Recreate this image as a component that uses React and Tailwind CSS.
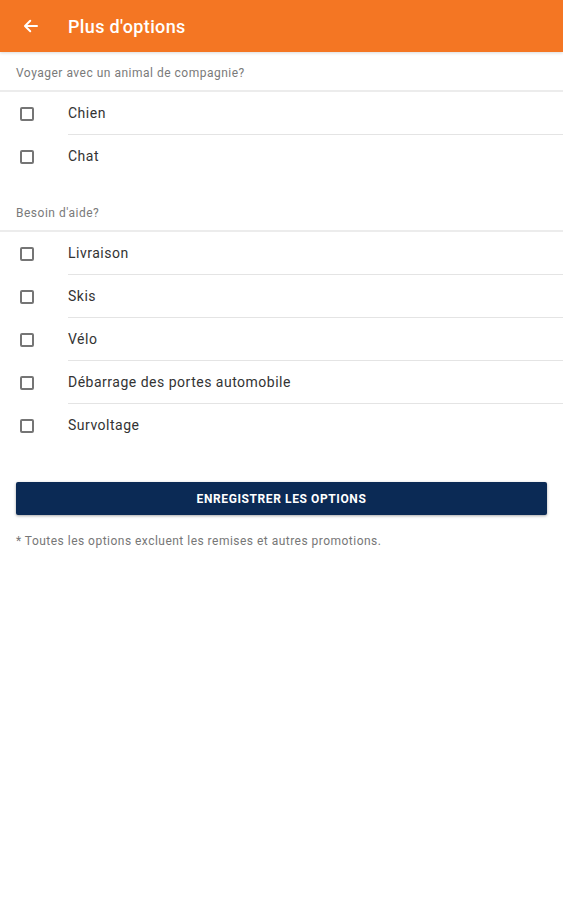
import React from "react";

function Row({ label, last }) {
  return (
    <div className="flex h-[43px] items-center">
      <div className="flex w-[68px] shrink-0 items-center pl-[20px]">
        <div className="h-[14px] w-[14px] rounded-[2px] border-2 border-[#757575]" />
      </div>
      <div className={`flex h-full flex-1 items-center text-[14px] tracking-[0.5px] text-[#333] ${last ? "" : "border-b border-[#e4e4e4]"}`}>
        {label}
      </div>
    </div>
  );
}

function SectionHeader({ children }) {
  return (
    <div className="flex h-[40px] items-center border-b-2 border-[#ececec] pl-[16px] pt-[3px] text-[12px] tracking-[0.5px] text-[#7a7a7a]">
      {children}
    </div>
  );
}

export default function App() {
  return (
    <div className="min-h-[900px] bg-white" style={{ fontFamily: "Roboto, 'Noto Sans', sans-serif" }}>
      <div className="relative z-10 flex h-[52px] items-center bg-[#f47623] shadow-[0_1px_3px_rgba(0,0,0,0.15)]">
        <div className="flex w-[68px] items-center pl-[22px]">
          <svg width="18" height="18" viewBox="0 0 24 24" fill="none" stroke="white" strokeWidth="2.6" strokeLinecap="round" strokeLinejoin="round">
            <path d="M20 12H5" />
            <path d="M11 5l-7 7 7 7" />
          </svg>
        </div>
        <div className="pt-[1px] text-[18px] font-medium tracking-[0.35px] text-white">Plus d'options</div>
      </div>
      <SectionHeader>Voyager avec un animal de compagnie?</SectionHeader>
      <Row label="Chien" />
      <Row label="Chat" last />
      <div className="h-[14px]" />
      <SectionHeader>Besoin d'aide?</SectionHeader>
      <Row label="Livraison" />
      <Row label="Skis" />
      <Row label="Vélo" />
      <Row label="Débarrage des portes automobile" />
      <Row label="Survoltage" last />
      <div className="px-[16px] pt-[35px]">
        <button className="flex h-[33px] w-full items-center justify-center rounded-[2px] bg-[#0b2a55] text-[12px] font-bold tracking-[0.6px] text-white shadow-[0_1px_3px_rgba(0,0,0,0.35)]">
          ENREGISTRER LES OPTIONS
        </button>
      </div>
      <div className="px-[16px] pt-[17px] text-[12px] tracking-[0.48px] text-[#777]">
        * Toutes les options excluent les remises et autres promotions.
      </div>
    </div>
  );
}
